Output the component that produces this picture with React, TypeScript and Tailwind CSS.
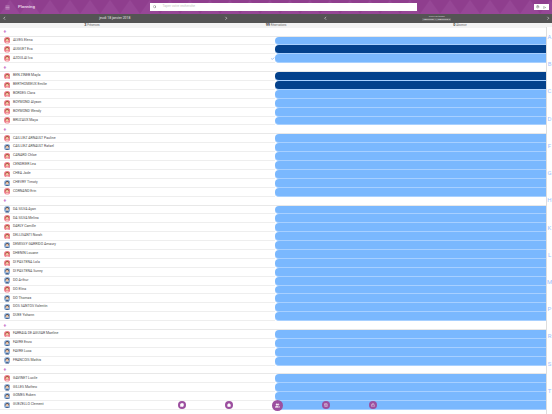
import React from "react";
import { ChevronLeft, ChevronRight, Menu, Search, Settings, LogOut, Check, MessageCircle, Home, Users, Briefcase, Lock } from "lucide-react";

type P = { n: string; g: "f" | "m"; d?: boolean; c?: boolean };
const f = (n: string, d?: boolean, c?: boolean): P => ({ n, g: "f", d, c });
const m = (n: string, d?: boolean): P => ({ n, g: "m", d });

const groups: { rows: P[] }[] = [
  { rows: [f("ALVES Elena"), f("AUGUET Eva", true), f("AZOULAI Iva", false, true)] },
  { rows: [f("BEN ZINEB Mayla", true), f("BERTHOMIEUX Emilie", true), f("BORDES Clara"), f("BOYMOND Alyson"), f("BOYMOND Wendy"), f("BRUZAUX Maya")] },
  { rows: [f("CAILLIEZ ARNAULT Pauline"), m("CAILLIEZ ARNAULT Rafael"), f("CANARD Chloe"), f("CENDRIER Lea"), f("CHEA Jade"), m("CHEVRY Timoty"), f("CORNAND Erin")] },
  { rows: [m("DA SILVA Ayan"), f("DA SILVA Melina"), f("DARLY Camille"), f("DELLISANTI Norah"), m("DEMISSY GARRIDO Amaury"), f("DHENIN Louane"), f("DI PASTENA Lola"), m("DI PASTENA Sunny"), m("DO Arthur"), f("DO Elina"), m("DO Thomas"), m("DOS SANTOS Valentin"), m("DUEE Yohann")] },
  { rows: [f("FARRAIA DE AGUIAR Maeline"), m("FAVRE Enzo"), m("FAVRE Luca"), m("FRANCOIS Mathis")] },
  { rows: [f("GAVINET Lucile"), m("GILLES Matheo"), m("GOMES Ruben"), m("GUEZELLO Clement")] },
];

const index = ["A", "B", "C", "D", "F", "G", "H", "K", "L", "M", "P", "R", "S", "T"];

function Avatar({ g }: { g: "f" | "m" }) {
  const bg = g === "f" ? "#ee7c8c" : "#8fb0d8";
  const hair = g === "f" ? "#9c5a34" : "#4b4650";
  return (
    <svg viewBox="0 0 24 24" className="w-[6.5px] h-[6.5px] shrink-0">
      <circle cx="12" cy="12" r="12" fill={bg} />
      <path d="M5 13c0-6 3-9 7-9s7 3 7 9z" fill={hair} />
      <circle cx="12" cy="12" r="4.8" fill="#f4c9a6" />
      <path d="M5 24c0-4 3-6 7-6s7 2 7 6z" fill={g === "f" ? "#f9c0c4" : "#49658f"} />
    </svg>
  );
}

function Row({ p }: { p: P }) {
  return (
    <div className="h-[8.9px] flex items-stretch">
      <div className="w-[275px] shrink-0 flex items-center pl-[3.5px] border-b-[0.5px] border-[#eeeeee] relative">
        <Avatar g={p.g} />
        <span className="ml-[3px] text-[3.5px] leading-none text-[#4c4c4c]">{p.n}</span>
        {p.c && <Check className="absolute right-[0.5px] top-[2.5px] w-[3.5px] h-[3.5px] text-[#5a90e0]" strokeWidth={4} />}
      </div>
      <div className={`flex-1 rounded-l-[4px] border-b-[0.5px] border-[#a8d0ff] ${p.d ? "bg-[#03418c]" : "bg-[#7ab8fe]"}`} />
    </div>
  );
}

function LetterRow() {
  return (
    <div className="h-[8.9px] flex items-center pl-[3.5px] border-b-[1px] border-[#e8e8e8] bg-white">
      <span className="text-[#c060c4] text-[5px] font-bold leading-none">+</span>
    </div>
  );
}

function Fab({ big, children }: { big?: boolean; children: React.ReactNode }) {
  return (
    <div className={`rounded-full bg-[#9c4f9f] flex items-center justify-center text-white ${big ? "w-[11px] h-[11px]" : "w-[8px] h-[8px]"}`}>
      {children}
    </div>
  );
}

function Stat({ n, label }: { n: string; label: string }) {
  return (
    <div className="flex-1 flex justify-center items-center">
      <span className="text-[3.8px] leading-none font-bold text-[#444444] mr-[0.8px]">{n}</span>
      <span className="text-[2.7px] leading-none">{label}</span>
    </div>
  );
}

export default function App() {
  return (
    <div className="w-[552px] h-[414px] overflow-hidden relative bg-white flex flex-col" style={{ fontFamily: "Roboto, sans-serif" }}>
      <header className="h-[14px] shrink-0 bg-[#8f3e8e] flex items-center relative overflow-hidden">
        <svg className="absolute inset-0 w-full h-full" viewBox="0 0 552 14" preserveAspectRatio="none">
          <defs>
            <pattern id="tri" width="20" height="14" patternUnits="userSpaceOnUse">
              <path d="M0 14L10 0L20 14z" fill="#964796" />
            </pattern>
          </defs>
          <rect width="552" height="14" fill="url(#tri)" />
        </svg>
        <div className="relative flex items-center w-full">
          <Menu className="ml-[4.5px] w-[5px] h-[5px] text-[#e3c9e3]" strokeWidth={2.5} />
          <span className="ml-[8.5px] text-[4.3px] leading-none font-medium text-[#efdfef]">Planning</span>
          <div className="ml-[115px] w-[267px] h-[8.5px] bg-white flex items-center pl-[3px]">
            <Search className="w-[3.5px] h-[3.5px] text-[#777777]" strokeWidth={3} />
            <span className="ml-[6px] text-[3.4px] leading-none text-[#c4c4c4]">Taper votre recherche</span>
          </div>
          <div className="ml-auto mr-[3.5px] w-[15px] h-[6px] bg-white flex items-center justify-around px-[1px] text-[#666666]">
            <Settings className="w-[3.5px] h-[3.5px]" strokeWidth={2.5} />
            <LogOut className="w-[3px] h-[3px]" strokeWidth={2.5} />
          </div>
        </div>
      </header>

      <div className="h-[8.7px] shrink-0 bg-[#545454] flex text-[#dddddd]">
        <div className="w-[50%] flex items-center justify-between pl-[1.5px] pr-[48px]">
          <ChevronLeft className="w-[4.5px] h-[4.5px]" strokeWidth={3.5} />
          <span className="text-[3.4px] leading-none text-[#e4e4e4]">jeudi 18 janvier 2018</span>
          <ChevronRight className="w-[4.5px] h-[4.5px]" strokeWidth={3.5} />
        </div>
        <div className="flex-1 flex items-center justify-between pl-[47px] pr-[1.5px]">
          <ChevronLeft className="w-[4.5px] h-[4.5px]" strokeWidth={3.5} />
          <div className="flex flex-col items-center">
            <span className="text-[2.3px] leading-[3px] text-[#cfcfcf]">Choix de temps</span>
            <span className="text-[2.5px] leading-[3px] text-[#e4e4e4] bg-[#666666] px-[1px]">CANTINE 1 | CANTINE 2</span>
          </div>
          <ChevronRight className="w-[4.5px] h-[4.5px]" strokeWidth={3.5} />
        </div>
      </div>

      <div className="h-[5px] shrink-0 bg-[#f3f3f3] flex items-center text-[#666666]">
        <Stat n="3" label="Présences" />
        <Stat n="99" label="Réservations" />
        <Stat n="0" label="Absence" />
      </div>

      <div className="flex-1 min-h-0 overflow-hidden pr-[6px]">
        {groups.map((g, i) => (
          <div key={i}>
            <LetterRow />
            {g.rows.map((p) => (
              <Row key={p.n} p={p} />
            ))}
          </div>
        ))}
      </div>

      <div className="absolute right-0 top-[27px] bottom-0 w-[6px] border-l-[0.5px] border-[#dedede] flex flex-col items-center pt-[6px] bg-white">
        {index.map((l) => (
          <div key={l} className="h-[28px] text-[6px] leading-[8px] text-[#a0c2fb]">{l}</div>
        ))}
      </div>

      <div className="absolute left-[178px] top-[399.5px] w-[199px] h-[11px] flex items-center justify-between">
        <Fab><MessageCircle className="w-[4px] h-[4px]" fill="white" /></Fab>
        <Fab><Home className="w-[4px] h-[4px]" fill="white" /></Fab>
        <Fab big><Users className="w-[5px] h-[5px]" fill="white" /></Fab>
        <Fab><Briefcase className="w-[4px] h-[4px]" /></Fab>
        <Fab><Lock className="w-[4px] h-[4px]" /></Fab>
      </div>
    </div>
  );
}
